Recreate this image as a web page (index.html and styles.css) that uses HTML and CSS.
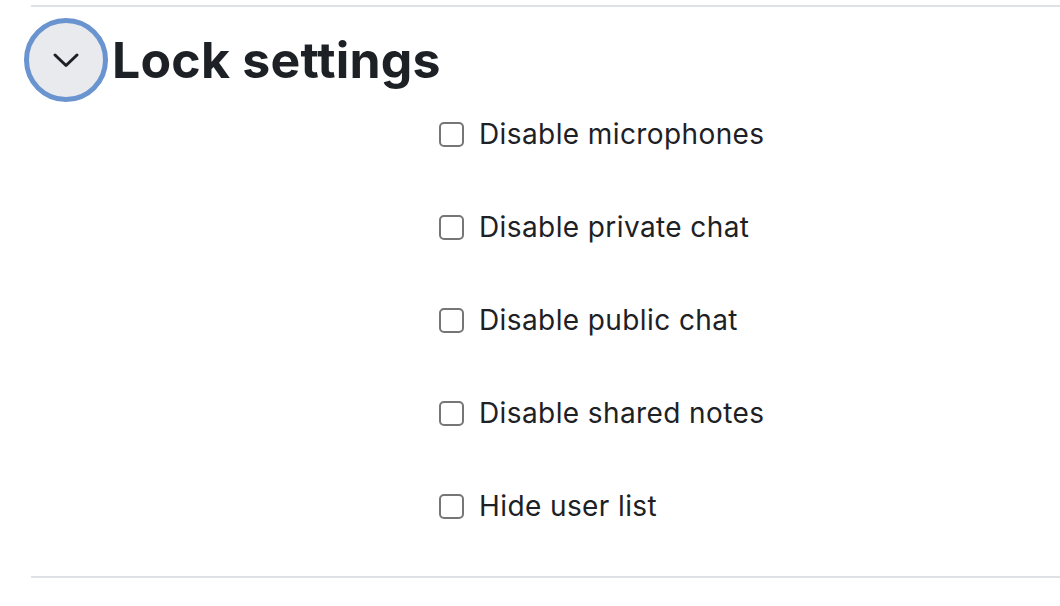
FILE: index.html
```html
<!DOCTYPE html>
<html lang="en">
  <head>
    <meta charset="UTF-8" />
    <title>Lock settings</title>
    <link rel="stylesheet" href="styles.css">
  </head>
  <body>
    <fieldset class="section">
      <div class="section-head">
        <button class="toggle" type="button" aria-expanded="true">
          <svg width="28" height="16" viewBox="0 0 28 16">
            <path d="M3 3 L14 13.5 L25 3" fill="none" stroke="#1d2125" stroke-width="3" stroke-linecap="round" stroke-linejoin="round" />
          </svg>
        </button>
        <h2 class="section-title">Lock settings</h2>
      </div>
      <div class="options">
        <label class="option"><span class="box"></span>Disable microphones</label>
        <label class="option"><span class="box"></span>Disable private chat</label>
        <label class="option"><span class="box"></span>Disable public chat</label>
        <label class="option"><span class="box"></span>Disable shared notes</label>
        <label class="option"><span class="box"></span>Hide user list</label>
      </div>
    </fieldset>
  </body>
</html>
```

FILE: styles.css
```css
body {
  margin: 0;
  background: #fff;
  font-family: Inter, "Liberation Sans", sans-serif;
  color: #1d2125;
}
.section {
  margin: 5px 0 0 31px;
  padding: 0;
  border: 0;
  border-top: 2px solid #dee2e6;
  border-bottom: 2px solid #dee2e6;
  height: 573px;
  box-sizing: border-box;
}
.section-head {
  display: flex;
  align-items: center;
  margin: 11px 0 0 -7px;
  gap: 4px;
}
.toggle {
  width: 84px;
  height: 84px;
  border-radius: 50%;
  border: 5px solid #6a94cf;
  background: #e9eaee;
  display: flex;
  align-items: center;
  justify-content: center;
  padding: 0;
}
.section-title {
  margin: 0;
  font-size: 50px;
  font-weight: 700;
  letter-spacing: 0.2px;
}
.options {
  display: flex;
  flex-direction: column;
  gap: 54px;
  padding: 13px 0 0 408px;
}
.option {
  display: flex;
  align-items: center;
  gap: 15px;
  font-size: 28px;
  line-height: 39px;
  letter-spacing: 0.4px;
}
.box {
  width: 21px;
  height: 21px;
  border: 2px solid #767676;
  border-radius: 5px;
  background: #fff;
}
```
